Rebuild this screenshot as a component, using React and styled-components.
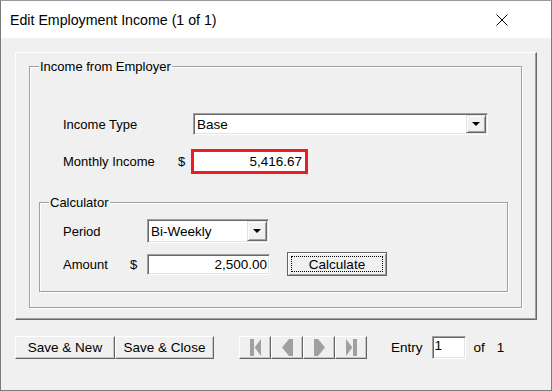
import styled, { createGlobalStyle } from 'styled-components';

const GlobalStyle = createGlobalStyle`
  html, body {
    margin: 0;
    padding: 0;
    background: #f0f0f0;
  }
  * {
    box-sizing: border-box;
  }
  body {
    font-family: "Liberation Sans", Arial, sans-serif;
    font-size: 13px;
    color: #000;
  }
`;

const App = () => {
  return (
    <>
      <GlobalStyle />
      <Window>
        <TitleBar>
          <Title>Edit Employment Income (1 of 1)</Title>
          <CloseIcon width="12" height="12" viewBox="0 0 12 12">
            <path d="M0.5 0.5 L11.5 11.5 M11.5 0.5 L0.5 11.5" stroke="#000" strokeWidth="1" />
          </CloseIcon>
        </TitleBar>

        <Body>
          <Panel>
            <Group>
              <Legend>Income from Employer</Legend>
              <MainRows>
                <Label>Income Type</Label>
                <span />
                <Combo $width={295} $height={22} $offset={2}>
                  <ComboText>Base</ComboText>
                  <DropButton>
                    <Arrow />
                  </DropButton>
                </Combo>

                <Label>Monthly Income</Label>
                <Label>$</Label>
                <HighlightBox>5,416.67</HighlightBox>
              </MainRows>

              <CalcGroup>
                <Legend>Calculator</Legend>
                <CalcRows>
                  <Label>Period</Label>
                  <span />
                  <Combo $width={122} $height={24}>
                    <ComboText>Bi-Weekly</ComboText>
                    <DropButton>
                      <Arrow />
                    </DropButton>
                  </Combo>
                  <span />

                  <Label>Amount</Label>
                  <Label>$</Label>
                  <NumberBox $width={123} $height={21}>2,500.00</NumberBox>
                  <CalcButton>
                    <FocusRing>Calculate</FocusRing>
                  </CalcButton>
                </CalcRows>
              </CalcGroup>
            </Group>
          </Panel>

          <Footer>
            <PushButton $width={100}>Save &amp; New</PushButton>
            <PushButton $width={99}>Save &amp; Close</PushButton>

            <NavGroup>
              <NavButton>
                <NavGlyph points="0,0 4,0 4,17 0,17" extra="4.6,8.5 11,0 11,17" />
              </NavButton>
              <NavButton>
                <NavGlyph points="0,8.5 7,0 11,0 11,17 7,17" />
              </NavButton>
              <NavButton>
                <NavGlyph points="0,0 4,0 11,8.5 4,17 0,17" />
              </NavButton>
              <NavButton>
                <NavGlyph points="0,0 6.4,8.5 0,17" extra="7,0 11,0 11,17 7,17" />
              </NavButton>
            </NavGroup>

            <FooterText $gap={24}>Entry</FooterText>
            <EntryBox>1</EntryBox>
            <FooterText $gap={8}>of</FooterText>
            <FooterText $gap={12}>1</FooterText>
          </Footer>
        </Body>
      </Window>
    </>
  );
};

const Arrow = () => (
  <svg width="8" height="4" viewBox="0 0 8 4">
    <polygon points="0,0 8,0 4,4" fill="#000" />
  </svg>
);

const NavGlyph = ({ points, extra }) => (
  <svg width="11" height="17" viewBox="0 0 11 17">
    <polygon points={points} fill="#a0a0a0" />
    {extra && <polygon points={extra} fill="#a0a0a0" />}
  </svg>
);

// スタイル定義
const Window = styled.div`
  width: 552px;
  height: 391px;
  border: 1px solid #7a7a7a;
  border-top-color: #9a9a9a;
  display: flex;
  flex-direction: column;
  background: #f0f0f0;
  overflow: hidden;
`;

const TitleBar = styled.div`
  height: 37px;
  flex-shrink: 0;
  background: #fff;
  display: flex;
  align-items: center;
  padding-left: 9px;
`;

const Title = styled.div`
  font-family: "Liberation Sans", Arial, sans-serif;
  font-size: 14.2px;
  color: #000;
  padding-top: 1px;
`;

const CloseIcon = styled.svg`
  margin-left: auto;
  margin-right: 43px;
`;

const Body = styled.div`
  flex: 1;
  padding: 14px 14px 0 14px;
`;

const Panel = styled.div`
  height: 268px;
  border: 1px solid;
  border-color: #fff #696969 #696969 #fff;
  box-shadow: inset -1px -1px 0 #a0a0a0;
  padding: 6px 14px 11px 13px;
  display: flex;
  flex-direction: column;
`;

const Group = styled.fieldset`
  flex: 1;
  margin: 0;
  min-width: 0;
  padding: 0 13px 15px 9px;
  border: 1px solid #a0a0a0;
  box-shadow: inset 1px 1px 0 #fff, 1px 1px 0 #fff;
`;

const CalcGroup = styled(Group)`
  flex: none;
  margin-top: 21px;
  padding: 0 0 15px 9px;
`;

const Legend = styled.legend`
  padding: 0 1px;
  line-height: 15px;
  font-size: 13px;
  background: #f0f0f0;
`;

const MainRows = styled.div`
  margin-top: 39px;
  padding-left: 24px;
  display: grid;
  grid-template-columns: 115px 13px auto;
  grid-template-rows: 22px 25px;
  row-gap: 14px;
  align-items: center;
  justify-items: start;
`;

const CalcRows = styled.div`
  margin-top: 9px;
  padding-left: 14px;
  display: grid;
  grid-template-columns: 67px 17px 123px auto;
  grid-template-rows: 24px 24px;
  row-gap: 9px;
  align-items: center;
  justify-items: start;
`;

const Label = styled.span`
  line-height: 15px;
  white-space: nowrap;
`;

const Sunken = styled.div`
  width: ${({ $width }) => $width}px;
  height: ${({ $height }) => $height}px;
  background: #fff;
  border: 1px solid;
  border-color: #a0a0a0 #fff #fff #a0a0a0;
  box-shadow: inset 1px 1px 0 #696969, inset -1px -1px 0 #e3e3e3;
`;

const Combo = styled(Sunken)`
  margin-left: ${({ $offset }) => $offset || 0}px;
  display: flex;
  align-items: stretch;
  padding: 1px 1px 1px 1px;
`;

const ComboText = styled.span`
  flex: 1;
  padding-left: 2px;
  display: flex;
  align-items: center;
  font-size: 13.5px;
`;

const DropButton = styled.div`
  width: 20px;
  background: #f0f0f0;
  border: 1px solid;
  border-color: #e3e3e3 #696969 #696969 #e3e3e3;
  box-shadow: inset 1px 1px 0 #fff, inset -1px -1px 0 #a0a0a0;
  display: flex;
  align-items: center;
  justify-content: center;
`;

const NumberBox = styled(Sunken)`
  display: flex;
  align-items: center;
  justify-content: flex-end;
  padding-right: 2px;
  font-size: 13.5px;
`;

const HighlightBox = styled.div`
  width: 117px;
  height: 25px;
  border: 3px solid #ed1c24;
  background: #fff;
  display: flex;
  align-items: center;
  justify-content: flex-end;
  padding-right: 3px;
  font-size: 13.5px;
`;

const CalcButton = styled.div`
  width: 100px;
  height: 24px;
  margin-left: 17px;
  padding: 3px;
  background: #f0f0f0;
  border: 1px solid #646464;
  box-shadow: inset 1px 1px 0 #fff, inset -1px -1px 0 #a0a0a0;
  display: flex;
`;

const FocusRing = styled.div`
  flex: 1;
  border: 1px dotted #000;
  display: flex;
  align-items: center;
  justify-content: center;
  font-size: 13.5px;
`;

const Footer = styled.div`
  margin-top: 16px;
  height: 23px;
  display: flex;
  align-items: center;
`;

const Raised = styled.div`
  height: 23px;
  background: #f0f0f0;
  border: 1px solid;
  border-color: #fff #646464 #646464 #fff;
  box-shadow: inset -1px -1px 0 #c8c8c8;
  display: flex;
  align-items: center;
  justify-content: center;
`;

const PushButton = styled(Raised)`
  width: ${({ $width }) => $width}px;
  font-size: 13.5px;
`;

const NavGroup = styled.div`
  margin-left: 25px;
  display: flex;
`;

const NavButton = styled(Raised)`
  width: 32px;
`;

const FooterText = styled.span`
  margin-left: ${({ $gap }) => $gap}px;
  font-size: 13.5px;
`;

const EntryBox = styled(Sunken)`
  width: 34px;
  height: 23px;
  margin-left: 9px;
  padding: 1px 0 0 2px;
  font-size: 13.5px;
`;

export default App;
